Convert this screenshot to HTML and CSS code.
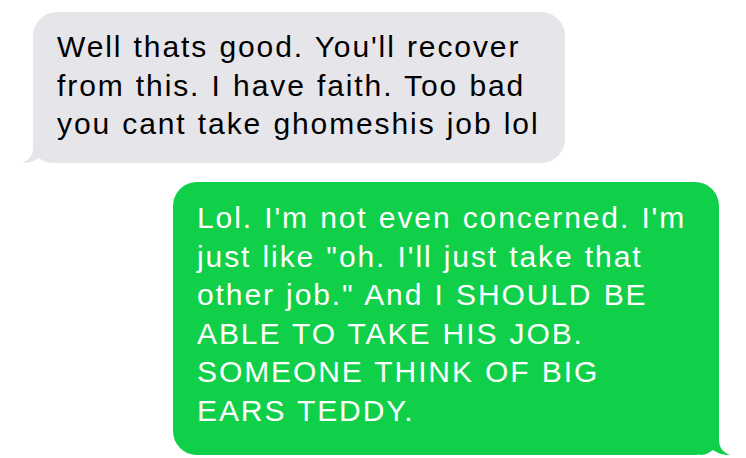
FILE: index.html
```html
<!DOCTYPE html>
<html lang="en">

<head>
    <meta charset="UTF-8">
    <meta name="viewport" content="width=device-width, initial-scale=1.0">
    <title>Messages</title>
    <link rel="stylesheet" href="styles.css">
</head>

<body>
    <div class="thread">
        <div class="bubble received">
            Well thats good. You'll recover<br>
            from this. I have faith. Too bad<br>
            you cant take ghomeshis job lol
            <svg class="tail" viewBox="0 0 30 36" width="30" height="36">
                <path d="M11 0 L11 20 C11 28 8 33 0 36 C7 36 13 34 17 31 C21 34 25 36 30 36 L30 0 Z" />
            </svg>
        </div>
        <div class="bubble sent">
            Lol. I'm not even concerned. I'm<br>
            just like "oh. I'll just take that<br>
            other job." And I SHOULD BE<br>
            ABLE TO TAKE HIS JOB.<br>
            SOMEONE THINK OF BIG<br>
            EARS TEDDY.
            <svg class="tail" viewBox="0 0 30 36" width="30" height="36">
                <path d="M19 0 L19 20 C19 28 22 33 30 36 C23 36 17 34 13 31 C9 34 5 36 0 36 L0 0 Z" />
            </svg>
        </div>
    </div>
</body>

</html>
```

FILE: styles.css
```css
body {
    margin: 0;
    background: #fff;
    font-family: "Liberation Sans", Arial, sans-serif;
}

.thread {
    display: flex;
    flex-direction: column;
    gap: 19px;
    padding-top: 12px;
}

.bubble {
    position: relative;
    box-sizing: border-box;
    border-radius: 24px;
    font-size: 30px;
    line-height: 38.5px;
    letter-spacing: 1.9px;
    word-spacing: 1px;
    padding: 16px 0 0 24px;
    white-space: nowrap;
}

.received {
    align-self: flex-start;
    margin-left: 33px;
    width: 532px;
    height: 151px;
    background: #e5e5ea;
    color: #000;
}

.sent {
    align-self: flex-end;
    margin-right: 27px;
    width: 546px;
    height: 273px;
    padding-top: 17px;
    background: #10d04a;
    color: #fff;
}

.tail {
    position: absolute;
    bottom: 0;
}

.received .tail {
    left: -11px;
    fill: #e5e5ea;
}

.sent .tail {
    right: -11px;
    fill: #10d04a;
}
```
